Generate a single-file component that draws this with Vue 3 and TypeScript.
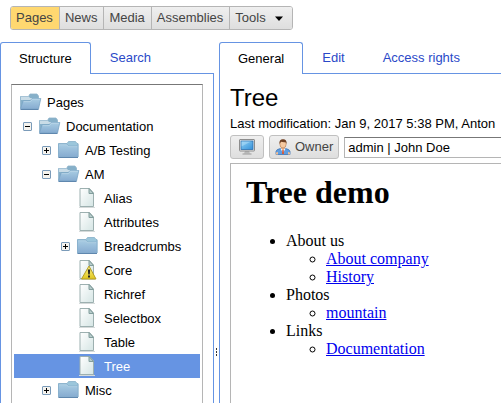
<script setup lang="ts">
import { ref } from 'vue'

interface TreeNode {
  label: string
  level: number
  icon: 'open' | 'closed' | 'file' | 'warning'
  toggle?: 'plus' | 'minus'
}

const sections: string[] = ['Pages', 'News', 'Media', 'Assemblies']
const currentSection = ref('Pages')

const nodes: TreeNode[] = [
  { label: 'Pages', level: 0, icon: 'open' },
  { label: 'Documentation', level: 1, icon: 'open', toggle: 'minus' },
  { label: 'A/B Testing', level: 2, icon: 'closed', toggle: 'plus' },
  { label: 'AM', level: 2, icon: 'open', toggle: 'minus' },
  { label: 'Alias', level: 3, icon: 'file' },
  { label: 'Attributes', level: 3, icon: 'file' },
  { label: 'Breadcrumbs', level: 3, icon: 'closed', toggle: 'plus' },
  { label: 'Core', level: 3, icon: 'warning' },
  { label: 'Richref', level: 3, icon: 'file' },
  { label: 'Selectbox', level: 3, icon: 'file' },
  { label: 'Table', level: 3, icon: 'file' },
  { label: 'Tree', level: 3, icon: 'file' },
  { label: 'Misc', level: 2, icon: 'closed', toggle: 'plus' },
]
const selected = ref('Tree')

const structureTabs: string[] = ['Structure', 'Search']
const structureTab = ref('Structure')
const pageTabs: string[] = ['General', 'Edit', 'Access rights']
const pageTab = ref('General')

const owner = ref('admin | John Doe')

const outline = [
  { title: 'About us', links: ['About company', 'History'] },
  { title: 'Photos', links: ['mountain'] },
  { title: 'Links', links: ['Documentation'] },
]
</script>

<template>
  <div class="app">
    <svg class="defs" width="0" height="0" aria-hidden="true">
      <defs>
        <linearGradient id="folder" x1="0" y1="0" x2="0" y2="1">
          <stop offset="0" stop-color="#a9cde3" />
          <stop offset="1" stop-color="#86abd0" />
        </linearGradient>
        <linearGradient id="sheet" x1="0" y1="0" x2="1" y2="1">
          <stop offset="0" stop-color="#ffffff" />
          <stop offset="1" stop-color="#d5e5e4" />
        </linearGradient>
        <linearGradient id="warn" x1="0" y1="0" x2="0" y2="1">
          <stop offset="0" stop-color="#fdf58a" />
          <stop offset="1" stop-color="#dfc51c" />
        </linearGradient>
        <linearGradient id="screen" x1="0" y1="0" x2="1" y2="1">
          <stop offset="0" stop-color="#8ed0f5" />
          <stop offset="1" stop-color="#3490d8" />
        </linearGradient>
      </defs>
    </svg>

    <nav class="sections">
      <button
        v-for="s in sections"
        :key="s"
        type="button"
        class="section"
        :class="{ current: s === currentSection }"
        @click="currentSection = s"
      >{{ s }}</button>
      <button type="button" class="section tools">
        Tools
        <svg width="8" height="5" viewBox="0 0 8 5" aria-hidden="true"><path d="M0 0.5H8L4 5Z" fill="#000" /></svg>
      </button>
    </nav>

    <div class="workspace">
      <section class="pane structure">
        <div class="tabs">
          <button
            v-for="t in structureTabs"
            :key="t"
            type="button"
            class="tab"
            :class="{ active: t === structureTab }"
            @click="structureTab = t"
          >{{ t }}</button>
          <span class="rule"></span>
        </div>
        <div class="pane-body">
          <ul class="tree">
            <li
              v-for="n in nodes"
              :key="n.label"
              class="node"
              :class="['level-' + n.level, { selected: n.label === selected }]"
              @click="selected = n.label"
            >
              <span v-if="n.level > 0" class="toggle">
                <svg v-if="n.toggle" width="9" height="9" viewBox="0 0 9 9" aria-hidden="true">
                  <rect x="0.5" y="0.5" width="8" height="8" rx="0.5" fill="#f5f3ee" stroke="#7b9bb9" />
                  <path d="M2 4.5H7" stroke="#000" />
                  <path v-if="n.toggle === 'plus'" d="M4.5 2V7" stroke="#000" />
                </svg>
              </span>
              <svg class="icon" width="22" height="20" viewBox="0 0 22 20" aria-hidden="true">
                <g v-if="n.icon === 'open'">
                  <path d="M0.400 4.500H8.500L10 2H17L18.500 4V16H0.400Z" fill="#86b0c9" stroke="#8fb4ca" stroke-width="0.800" />
                  <path d="M1 4.800H9L10 6H17.500V8H1Z" fill="#c9dce7" />
                  <path d="M0.500 17L3 9H10L12 6.500H20.800L18.500 17Z" fill="url(#folder)" stroke="#7aa5c5" stroke-width="0.800" />
                  <path d="M3.500 9.600H10.300L12.300 7.200H20" fill="none" stroke="#c3dced" stroke-width="0.700" />
                  <path d="M0.500 17.500H18.500" stroke="#5f87ae" />
                </g>
                <g v-else-if="n.icon === 'closed'">
                  <path d="M0.500 3.500H9L10.500 1.500H17.500L19 3.500H20V17H0.500Z" fill="#9bc6db" stroke="#86b0c8" stroke-width="0.800" />
                  <path d="M0.500 4H9L10.500 6H18.500L20 4.500V17H0.500Z" fill="url(#folder)" stroke="#86aecb" stroke-width="0.800" />
                  <path d="M1.200 4.800H8.700L10.300 6.700H19" fill="none" stroke="#bcd8e8" stroke-width="0.600" />
                  <path d="M0.500 17.500H20" stroke="#5f87ae" />
                </g>
                <g v-else>
                  <path d="M2 19.500H18" stroke="#d5dada" />
                  <path d="M3 0.500H12.500L16.500 5V18.500H3Z" fill="url(#sheet)" stroke="#9db0b0" />
                  <path d="M12 0.500V5.500H16.500Z" fill="#b8cccb" stroke="#829e9d" />
                  <g v-if="n.icon === 'warning'">
                    <path d="M12 6L19 19H4.500Z" fill="url(#warn)" stroke="#b49d25" stroke-linejoin="round" />
                    <path d="M10.800 9.500H13.200L12.700 14.500H11.300Z" fill="#222" />
                    <rect x="11" y="15.500" width="2" height="2" fill="#222" />
                  </g>
                </g>
              </svg>
              <span class="label">{{ n.label }}</span>
            </li>
          </ul>
        </div>
      </section>

      <div class="splitter" role="separator" aria-orientation="vertical">
        <i></i><i></i><i></i>
      </div>

      <section class="pane page">
        <div class="tabs">
          <button
            v-for="t in pageTabs"
            :key="t"
            type="button"
            class="tab"
            :class="{ active: t === pageTab }"
            @click="pageTab = t"
          >{{ t }}</button>
          <span class="rule"></span>
        </div>
        <div class="pane-body">
          <h2 class="title">Tree</h2>
          <p class="modified">Last modification: Jan 9, 2017 5:38 PM, Anton</p>
          <div class="actions">
            <button type="button" class="action" aria-label="Preview">
              <svg width="16" height="16" viewBox="0 0 16 16" aria-hidden="true">
                <path d="M6 12H10L11 14.500H5Z" fill="#b8b8b8" />
                <path d="M3.500 15H12.500" stroke="#999" />
                <rect x="0.500" y="0.500" width="15" height="11.500" rx="0.500" fill="#e9e9e9" stroke="#8d8d8d" />
                <rect x="2" y="2" width="12" height="8.500" fill="url(#screen)" stroke="#2c6fae" stroke-width="0.800" />
                <path d="M2.500 2.500H12L2.500 7.500Z" fill="#b7e2fa" opacity="0.500" />
              </svg>
            </button>
            <button type="button" class="action" @click="owner = ''">
              <svg width="16" height="16" viewBox="0 0 16 16" aria-hidden="true">
                <path d="M1 15.500V12.500Q1.200 10.300 5.500 9.500H10.500Q14.800 10.300 15 12.500V15.500Z" fill="#5f9de0" stroke="#3d74b5" stroke-width="0.800" />
                <path d="M5.500 9.500H10.500L8 14Z" fill="#fff" />
                <path d="M7.300 10.500H8.700L9 15H7Z" fill="#d35a3a" />
                <path d="M6.300 7H9.700V9.800L8 11L6.300 9.800Z" fill="#e8ab80" />
                <ellipse cx="8" cy="5" rx="3.200" ry="4" fill="#f6c9a0" stroke="#a8693a" stroke-width="0.500" />
                <path d="M4.500 5Q3.800 0.300 8 0.300T11.500 5L10.700 3.200Q8 3.500 6 2.800Z" fill="#6e3f22" />
                <path d="M1 15.500V13.500L3 13V15.500ZM15 15.500V13.500L13 13V15.500Z" fill="#f3bd91" />
              </svg>
              Owner
            </button>
            <input v-model="owner" class="owner" type="text" aria-label="Owner" />
          </div>
          <article class="preview">
            <h1>Tree demo</h1>
            <ul>
              <li v-for="group in outline" :key="group.title">
                {{ group.title }}
                <ul>
                  <li v-for="link in group.links" :key="link"><a href="#">{{ link }}</a></li>
                </ul>
              </li>
            </ul>
          </article>
        </div>
      </section>
    </div>
  </div>
</template>

<style>
body {
  margin: 0;
  background: #fff;
}
</style>

<style scoped>
.app {
  box-sizing: border-box;
  display: flex;
  flex-direction: column;
  gap: 12px;
  height: 100vh;
  padding-top: 6px;
  overflow: hidden;
  font: 13px/16px "Liberation Sans", Arial, sans-serif;
  color: #000;
}
.defs {
  position: absolute;
}
button,
input {
  font: inherit;
}

.sections {
  display: flex;
  flex: none;
  align-self: flex-start;
  margin-left: 10px;
  border: 1px solid #b5b5b5;
  border-radius: 3px;
  overflow: hidden;
}
.section {
  height: 22px;
  padding: 0 6px 0 5px;
  border: 0;
  border-right: 1px solid #b5b5b5;
  background: linear-gradient(#efefef, #dedede);
  color: #444;
}
.section.current {
  background: #ffd870;
}
.section.tools {
  display: flex;
  align-items: center;
  gap: 9px;
  padding-right: 9px;
  border-right: 0;
}

.workspace {
  display: flex;
  flex: 1;
  min-height: 0;
}
.pane {
  display: flex;
  flex-direction: column;
  min-height: 0;
}
.structure {
  flex: none;
  width: 214px;
}
.page {
  flex: 1;
  min-width: 0;
}
.tabs {
  display: flex;
  flex: none;
  height: 32px;
}
.tab {
  padding: 0 19px;
  border: 0;
  border-bottom: 1px solid #6694e3;
  background: none;
  color: #2a49c8;
  white-space: nowrap;
}
.tab.active {
  padding: 0 18px;
  border: 1px solid #6694e3;
  border-bottom: 0;
  border-radius: 3px 3px 0 0;
  color: #000;
}
.rule {
  flex: 1;
  border-bottom: 1px solid #6694e3;
}
.pane-body {
  display: flex;
  flex: 1;
  flex-direction: column;
  min-height: 0;
  padding: 10px 10px 0;
  border-left: 1px solid #6694e3;
}
.structure .pane-body {
  border-right: 1px solid #6694e3;
}
.page .pane-body {
  padding-right: 0;
}

.tree {
  flex: 1;
  margin: 0;
  padding: 5px 2px;
  border: 1px solid #b5b5b5;
  border-top-color: #777;
  border-bottom: 0;
  list-style: none;
}
.node {
  display: flex;
  align-items: center;
  height: 24px;
  padding-left: 6px;
  cursor: default;
}
.node.level-2 {
  padding-left: 25px;
}
.node.level-3 {
  padding-left: 44px;
}
.node.selected {
  background: #6694e3;
  color: #fff;
}
.toggle {
  display: flex;
  flex: none;
  justify-content: center;
  width: 15px;
  padding-right: 4px;
}
.icon {
  flex: none;
  margin-right: 5px;
}
.label {
  padding-top: 2px;
}

.splitter {
  display: flex;
  flex: none;
  flex-direction: column;
  align-items: center;
  justify-content: flex-end;
  gap: 1px;
  width: 5px;
  padding-bottom: 47px;
}
.splitter i {
  width: 1px;
  height: 2px;
  background: #333;
}

.title {
  margin: 0;
  font-size: 24px;
  font-weight: 400;
  line-height: 28px;
}
.modified {
  margin: 4px 0 3px;
  white-space: nowrap;
}
.actions {
  display: flex;
  flex: none;
  align-items: center;
  gap: 5px;
}
.action {
  display: flex;
  align-items: center;
  gap: 4px;
  height: 24px;
  padding: 0 5px;
  border: 1px solid #c0c0c0;
  border-radius: 3px;
  background: linear-gradient(#efefef, #dedede);
  color: #444;
}
.action:first-child {
  padding: 0 8px;
}
.owner {
  box-sizing: border-box;
  flex: 1;
  min-width: 0;
  height: 21px;
  padding: 0 3px;
  border: 1px solid #b5b5b5;
  border-top-color: #777;
  border-right: 0;
}
.preview {
  flex: 1;
  min-height: 0;
  margin-top: 4px;
  padding: 10px 15px;
  border: 1px solid #b5b5b5;
  border-width: 1px 0 0 1px;
  font: 16px/18px "Liberation Serif", "Times New Roman", serif;
}
.preview h1 {
  margin: 0;
  font-size: 32px;
  line-height: 36px;
}
.preview ul {
  margin: 22px 0 0;
  padding-left: 40px;
}
.preview ul ul {
  margin: 0;
}
.preview a {
  color: #0000ee;
}
</style>
